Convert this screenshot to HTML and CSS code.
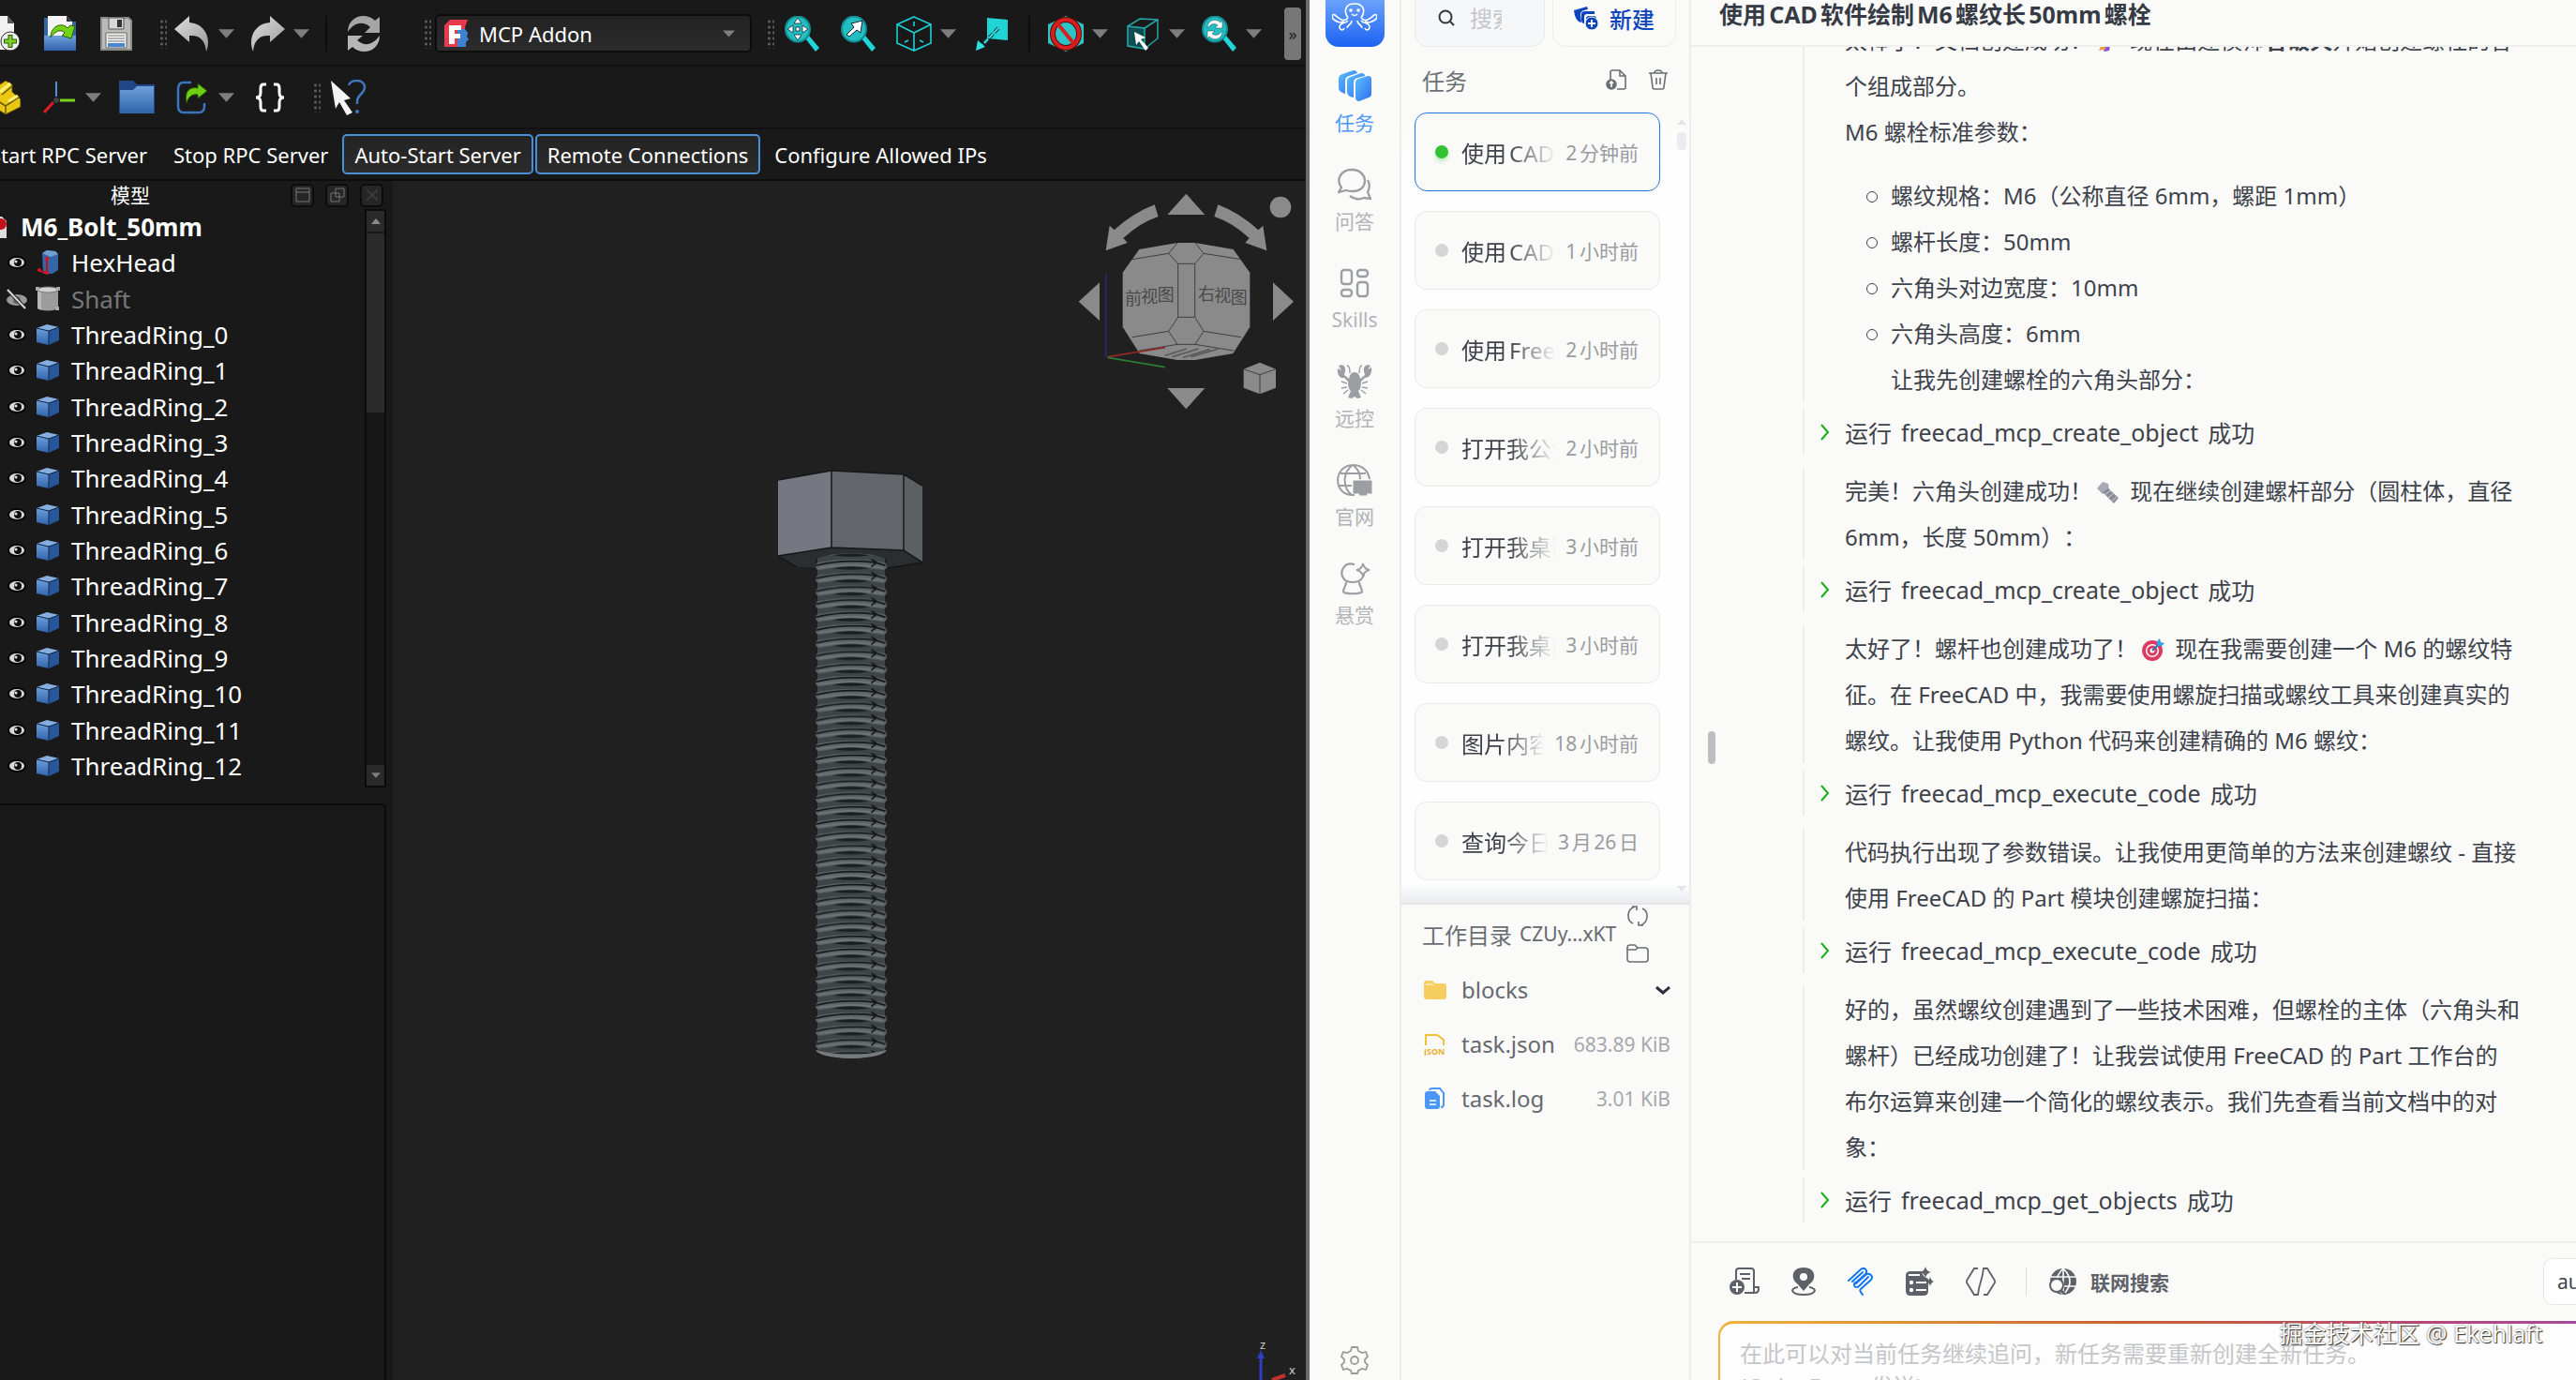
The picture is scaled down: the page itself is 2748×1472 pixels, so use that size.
FILE: index.html
```html
<!DOCTYPE html>
<html lang="zh-CN">
<head>
<meta charset="utf-8">
<title>FreeCAD MCP</title>
<link rel="stylesheet" href="styles.css">
</head>
<body>
<svg class="defs" aria-hidden="true">
  <defs>
    <linearGradient id="gSteel" x1="0" y1="0" x2="1" y2="1"><stop offset="0" stop-color="#dedede"/><stop offset="1" stop-color="#9a9a9a"/></linearGradient>
    <linearGradient id="gBlue" x1="0" y1="0" x2="0" y2="1"><stop offset="0" stop-color="#6fa0dc"/><stop offset="1" stop-color="#2f63ab"/></linearGradient>
    <linearGradient id="gSky" x1="0" y1="0" x2="1" y2="1"><stop offset="0" stop-color="#5cc0ff"/><stop offset="1" stop-color="#2f6cf0"/></linearGradient>
    <symbol id="eye" viewBox="0 0 20 14"><ellipse cx="10" cy="7" rx="10" ry="7" fill="#050505"/><ellipse cx="10" cy="7" rx="8" ry="5" fill="#d9d9d9"/><circle cx="11" cy="7" r="4" fill="#0a0a0a"/><circle cx="9" cy="6" r="1.6" fill="#d9d9d9"/></symbol>
    <symbol id="box" viewBox="0 0 26 24"><path d="M1 5 12 1l13 3-11 4z" fill="#86aede"/><path d="M1 5l13 3v15L1 20z" fill="url(#gBlue)"/><path d="M14 8 25 4v14l-11 5z" fill="#28569a"/><path d="M1 5l13 3 11-4M14 8v15" stroke="#10264a" fill="none"/></symbol>
    <symbol id="caret" viewBox="0 0 18 10"><path d="M0 0h18L9 10z" fill="#7e7e7e"/></symbol>
    <symbol id="lens" viewBox="0 0 38 38"><path d="M22 24l4-3 11 13-4 4z" fill="#1fd5d8"/><ellipse cx="14" cy="14" rx="13" ry="13.500" fill="#22bfc2" stroke="#138f93" stroke-width="2"/></symbol>
  </defs>
</svg>
<div class="desktop">
<section class="cad">
  <div class="toolbar">
    <div class="tools edit">
      <button class="tool" aria-label="新建文件"><svg width="38" height="40" viewBox="0 0 38 40"><path d="M2 1h21l7 8v28H2z" fill="#f1f1f1"/><path d="M23 1l7 8h-7z" fill="#555"/><circle cx="26" cy="28" r="10" fill="#f0f0f0" stroke="#333"/><path d="M26 21v14M19 28h14" stroke="#2a5a10" stroke-width="5"/><path d="M26 22v12M20 28h12" stroke="#7ed321" stroke-width="3"/></svg></button>
      <button class="tool" aria-label="打开"><svg width="34" height="38" viewBox="0 0 34 38"><path d="M0 2h4v20H0zM30 6h4v16h-4z" fill="#3465a4"/><path d="M4 0h20l6 6v20H4z" fill="#f4f4f4"/><path d="M24 0l6 6h-6z" fill="#333"/><path d="M0 21h34v16H0z" fill="url(#gBlue)"/><path d="M7 23c0-14 14-16 18-10l3-3 5 1-4 13-10-3 3-3c-4-4-9-3-15 5z" fill="#73d216" stroke="#2b5d07"/></svg></button>
      <button class="tool" aria-label="保存"><svg width="34" height="36" viewBox="0 0 34 36"><path d="M1 1h29l3 3v31H1z" fill="#b9bbb8" stroke="#8a8c89" stroke-width="2"/><path d="M9 1h16v12H9z" fill="#d8d8d8" stroke="#555"/><path d="M18 3h5v8h-5z" fill="#333"/><path d="M6 17h22v16H6z" fill="#f2f2f2" stroke="#666"/><path d="M8 20h18M8 23h18M8 26h18" stroke="#777"/><path d="M8 28h18v4H8z" fill="#4a86cf"/></svg></button>
      <span class="grip"></span>
      <span class="split"><button aria-label="撤销"><svg width="38" height="40" viewBox="0 0 38 40"><path d="M0 15 16 1v7c16 1 24 16 18 31-1-12-7-18-18-17v7z" fill="url(#gSteel)"/></svg></button><button class="drop" aria-label="撤销列表"><svg width="17" height="10"><use href="#caret"/></svg></button></span>
      <span class="split"><button aria-label="重做"><svg width="38" height="40" viewBox="0 0 38 40"><path d="M38 15 22 1v7C6 9-2 24 4 39c1-12 7-18 18-17v7z" fill="url(#gSteel)"/></svg></button><button class="drop" aria-label="重做列表"><svg width="17" height="10"><use href="#caret"/></svg></button></span>
      <span class="rule"></span>
      <button class="tool" aria-label="刷新"><svg width="36" height="40" viewBox="0 0 36 40"><path d="M1 18C1 1 20-4 30 6l5-4v17H19l6-6C17 6 8 8 1 18z" fill="#a5a5a5"/><path d="M35 22c0 17-19 22-29 12l-5 4V22h16l-6 5c8 7 17 5 24-5z" fill="#b5b5b5"/></svg></button>
    </div>
    <span class="grip apart"></span>
    <button class="combo" aria-label="工作台"><svg width="26" height="30" viewBox="0 0 26 30"><path d="M0 6 6 0h19l-3 8v8L14 29H0z" fill="#e8394d"/><path d="M14 10h8l3 4-1 4 2 3-3 3v5H14z" fill="#3b83d2"/><path d="M5 6h13v5h-7v4h6v5h-6v6H5z" fill="#fff"/></svg><span class="combo-text">MCP Addon</span><svg width="13" height="8"><use href="#caret"/></svg></button>
    <div class="tools view-tools">
      <span class="grip"></span>
      <button class="tool" aria-label="适合全部"><svg width="38" height="38" viewBox="0 0 38 38"><use href="#lens"/><path d="M14 2l4 6h-8zM14 26l4-6h-8zM3 14l6-4v8zM25 14l-6-4v8zM12 12h4v4h-4z" fill="#fff" stroke="#123" stroke-width=".8"/></svg></button>
      <button class="tool" aria-label="适合选择"><svg width="38" height="38" viewBox="0 0 38 38"><use href="#lens"/><path d="M6 20 14 12l-3-4 12-3-2 13-4-3-8 7z" fill="#fff" stroke="#123"/></svg></button>
      <span class="split"><button aria-label="轴测图"><svg width="38" height="38" viewBox="0 0 38 38" fill="none" stroke="#1fd0d4" stroke-width="1.600"><path d="M19 1 37 9v20l-18 8L1 29V9zM1 9l18 9 18-9M19 18v19M19 6v5M9 28l4-2M29 28l-4-2"/></svg></button><button class="drop" aria-label="视图列表"><svg width="17" height="10"><use href="#caret"/></svg></button></span>
      <button class="tool" aria-label="转到链接"><svg width="34" height="36" viewBox="0 0 34 36"><path d="M12 1l22 2v22l-22-2z" fill="#22d3d6"/><path d="M24 12 6 31" stroke="#0a5c60" stroke-width="4" stroke-dasharray="6 2"/><path d="M24 12 6 31" stroke="#5fe4e6" stroke-width="1.500" stroke-dasharray="6 2"/><path d="M0 36l2-11 8 7z" fill="#2de0e2"/></svg></button>
      <span class="rule"></span>
      <span class="split"><button aria-label="绘制样式"><svg width="38" height="38" viewBox="0 0 38 38"><path d="M19 0 38 9v20l-19 9L0 29V9z" fill="#2cc4c7"/><ellipse cx="19" cy="19" rx="14" ry="15" fill="none" stroke="#5a0808" stroke-width="6"/><ellipse cx="19" cy="19" rx="14" ry="15" fill="none" stroke="#d81e1e" stroke-width="4"/><path d="M10 8l18 22" stroke="#d81e1e" stroke-width="4"/></svg></button><button class="drop" aria-label="样式列表"><svg width="17" height="10"><use href="#caret"/></svg></button></span>
      <span class="split"><button aria-label="框选"><svg width="34" height="36" viewBox="0 0 34 36"><path d="M1 10l18 2v22L1 31z" fill="#0e4c50"/><path d="M1 10l18 2v22L1 31zM1 10 14 2l19 1-14 9M33 3v20L19 34" fill="none" stroke="#25a9ad" stroke-width="1.500"/><path d="M8 16l12 6-5 2 8 9-3 3-7-10-3 4z" fill="#fff"/></svg></button><button class="drop" aria-label="框选列表"><svg width="17" height="10"><use href="#caret"/></svg></button></span>
      <span class="split"><button aria-label="同步视图"><svg width="38" height="38" viewBox="0 0 38 38"><use href="#lens"/><path d="M6 13c0-9 9-11 14-6l2-2v8h-8l3-3c-4-3-8-1-11 3zM22 16c0 9-9 11-14 6l-2 2v-8h8l-3 3c4 3 8 1 11-3z" fill="#fff" stroke="#245" stroke-width=".5"/></svg></button><button class="drop" aria-label="同步列表"><svg width="17" height="10"><use href="#caret"/></svg></button></span>
    </div>
    <button class="more" aria-label="更多">»</button>
  </div>
  <div class="toolbar second">
    <div class="tools">
      <button class="tool" aria-label="零件"><svg width="36" height="36" viewBox="0 0 36 36"><path d="M8 8l12-8 7 4v8l9 8v8L20 36 4 26z" fill="#e9c712" stroke="#57490a"/><path d="M16 15 27 6M22 26l13-9M12 22l8 5v8M20 27l7-5" stroke="#6b5a05" stroke-width="1.500" fill="none"/><path d="M14 12 25 3M23 22l10-6" stroke="#fff27a" stroke-width="3"/></svg></button>
      <span class="split"><button aria-label="坐标系"><svg width="34" height="34" viewBox="0 0 34 34"><path d="M14 0v20" stroke="#4a90d9" stroke-width="2"/><path d="M14 20h20" stroke="#7ed321" stroke-width="3"/><path d="M13 20 1 33" stroke="#e01b24" stroke-width="3"/><circle cx="14" cy="20" r="3.500" fill="#444" stroke="#111"/></svg></button><button class="drop" aria-label="坐标系列表"><svg width="17" height="10"><use href="#caret"/></svg></button></span>
      <button class="tool" aria-label="组"><svg width="38" height="36" viewBox="0 0 38 36"><path d="M0 0h15l4 4h19v31H0z" fill="#1f478a"/><path d="M1 10h14l4-4h18v29H1z" fill="url(#gBlue)"/></svg></button>
      <span class="split"><button aria-label="链接"><svg width="34" height="36" viewBox="0 0 34 36"><path d="M16 2H8Q2 2 2 9v18q0 7 6 7h16q6 0 6-7v-3" fill="none" stroke="#3a76bd" stroke-width="2.500"/><path d="M11 24c-3-13 4-18 12-16V3l10 8-10 8v-4c-6-1-10 2-12 9z" fill="#6fce14" stroke="#245204"/></svg></button><button class="drop" aria-label="链接列表"><svg width="17" height="10"><use href="#caret"/></svg></button></span>
      <button class="tool" aria-label="变量集"><svg width="34" height="32" viewBox="0 0 34 32" fill="none" stroke="#fff" stroke-width="3"><path d="M13 2H10Q7 2 7 6v5q0 5-5 5 5 0 5 5v5q0 4 3 4h3M21 2h3q3 0 3 4v5q0 5 5 5-5 0-5 5v5q0 4-3 4h-3"/></svg></button>
      <span class="grip"></span>
      <button class="tool" aria-label="这是什么"><svg width="38" height="38" viewBox="0 0 38 38"><path d="M19 6c2-7 17-7 17 2 0 7-8 8-8 15v3" fill="none" stroke="#3f78bd" stroke-width="2.500"/><circle cx="28" cy="34" r="2" fill="#3f78bd"/><path d="M0 1l21 19-7 2 9 13-6 3-8-14-4 7z" fill="#f4f4f4"/></svg></button>
    </div>
  </div>
  <div class="rpc">
    <button>Start RPC Server</button>
    <button>Stop RPC Server</button>
    <button class="on">Auto-Start Server</button>
    <button class="on">Remote Connections</button>
    <button>Configure Allowed IPs</button>
  </div>
  <div class="work">
    <aside class="model">
      <div class="model-head"><span class="model-title">模型</span>
        <button aria-label="停靠"><svg width="16" height="16" viewBox="0 0 16 16" fill="none" stroke="#777"><path d="M1 1h14v14H1zM1 5h14"/></svg></button>
        <button aria-label="浮动"><svg width="16" height="16" viewBox="0 0 16 16" fill="none" stroke="#777"><path d="M6 1h9v9H6zM1 6h9v9H1z"/></svg></button>
        <button aria-label="关闭"><svg width="16" height="16" viewBox="0 0 16 16" fill="none" stroke="#3a3a3a" stroke-width="2"><path d="M2 2l12 12M14 2 2 14"/></svg></button>
      </div>
      <div class="tree">
        <ul>
          <li class="root"><svg width="8" height="26" viewBox="0 0 8 26"><path d="M0 2h2l5 5v18H0z" fill="#ddd"/><circle cx="1" cy="10" r="6" fill="#c4121c"/></svg><span>M6_Bolt_50mm</span></li>
          <li><svg width="20" height="14"><use href="#eye"/></svg><svg width="26" height="26" viewBox="0 0 26 26"><path d="M7 3l5-3 9 1 3 3v17l-6 4H8z" fill="#3465a4"/><path d="M7 3l5-3 9 1 3 3-8 3z" fill="#729fcf"/><path d="M12 9v15M12 24l-8-2" stroke="#c01020" stroke-width="2"/><circle cx="12" cy="9" r="2" fill="#e01020"/><circle cx="12" cy="24" r="2" fill="#e01020"/><circle cx="4" cy="21" r="2" fill="#e01020"/></svg><span>HexHead</span></li>
          <li class="off"><svg width="22" height="22" viewBox="0 0 22 22"><ellipse cx="11" cy="12" rx="11" ry="6" fill="#9a9a9a"/><circle cx="11" cy="12" r="4" fill="#666"/><path d="M1 1l19 20" stroke="#222" stroke-width="4"/><path d="M1 1l19 20" stroke="#d8d8d8" stroke-width="2"/></svg><svg width="26" height="28" viewBox="0 0 26 28"><path d="M2 4v20q11 5 22 0V4z" fill="#9c9c9c"/><path d="M2 4v20l4 2V5z" fill="#b8b8b8"/><ellipse cx="13" cy="4" rx="11" ry="3" fill="#d0d0d0" stroke="#777"/><path d="M0 1h4v4H0zM22 1h4v4h-4zM21 22h4v4h-4z" fill="#aaa"/></svg><span>Shaft</span></li>
          <li><svg width="20" height="14"><use href="#eye"/></svg><svg width="26" height="24"><use href="#box"/></svg><span>ThreadRing_0</span></li>
          <li><svg width="20" height="14"><use href="#eye"/></svg><svg width="26" height="24"><use href="#box"/></svg><span>ThreadRing_1</span></li>
          <li><svg width="20" height="14"><use href="#eye"/></svg><svg width="26" height="24"><use href="#box"/></svg><span>ThreadRing_2</span></li>
          <li><svg width="20" height="14"><use href="#eye"/></svg><svg width="26" height="24"><use href="#box"/></svg><span>ThreadRing_3</span></li>
          <li><svg width="20" height="14"><use href="#eye"/></svg><svg width="26" height="24"><use href="#box"/></svg><span>ThreadRing_4</span></li>
          <li><svg width="20" height="14"><use href="#eye"/></svg><svg width="26" height="24"><use href="#box"/></svg><span>ThreadRing_5</span></li>
          <li><svg width="20" height="14"><use href="#eye"/></svg><svg width="26" height="24"><use href="#box"/></svg><span>ThreadRing_6</span></li>
          <li><svg width="20" height="14"><use href="#eye"/></svg><svg width="26" height="24"><use href="#box"/></svg><span>ThreadRing_7</span></li>
          <li><svg width="20" height="14"><use href="#eye"/></svg><svg width="26" height="24"><use href="#box"/></svg><span>ThreadRing_8</span></li>
          <li><svg width="20" height="14"><use href="#eye"/></svg><svg width="26" height="24"><use href="#box"/></svg><span>ThreadRing_9</span></li>
          <li><svg width="20" height="14"><use href="#eye"/></svg><svg width="26" height="24"><use href="#box"/></svg><span>ThreadRing_10</span></li>
          <li><svg width="20" height="14"><use href="#eye"/></svg><svg width="26" height="24"><use href="#box"/></svg><span>ThreadRing_11</span></li>
          <li><svg width="20" height="14"><use href="#eye"/></svg><svg width="26" height="24"><use href="#box"/></svg><span>ThreadRing_12</span></li>
        </ul>
        <div class="scroll"><span class="end"><svg width="10" height="6" viewBox="0 0 10 6"><path d="M0 6h10L5 0z" fill="#8a8a8a"/></svg></span><span class="thumb"></span><span class="end"><svg width="10" height="6"><use href="#caret"/></svg></span></div>
      </div>
      <div class="props"></div>
    </aside>
    <main class="view3d">
      <svg class="bolt" width="160" height="632" viewBox="0 0 160 632">
        <defs>
          <pattern id="rings" x="42" y="94" width="76" height="13.800" patternUnits="userSpaceOnUse">
            <rect width="76" height="13.800" fill="#1d2021"/>
            <rect x="2" width="72" height="13.800" fill="#3f4446"/>
            <g fill="none" stroke-linecap="round">
              <path d="M4-4Q38-10 72-4M4 9.800Q38 3.800 72 9.800" stroke="#5e6365" stroke-width="8"/>
              <path d="M4 11.500Q38 6 72 11.500M4-2.300Q38-7.800 72-2.300" stroke="#70757a" stroke-width="1.500"/>
              <path d="M1 9Q30 2 64 6l10 3M60 3l5 3-5 4" stroke="#111517" stroke-width="1.700"/>
            </g>
            <path d="M18 12q20-4 40 0-20 3-40 0z" fill="#181d1f"/>
          </pattern>
        </defs>
        <path d="M2 93 59 84 136 87 156 100 119 106 22 105z" fill="#2a2e31"/>
        <path d="M42 96q38-12 76 0v524q-38 18-76 0z" fill="url(#rings)"/>
        <path d="M42 620q38 10 76 0-4 8-38 9-34-1-38-9z" fill="#767b7d"/>
        <path d="M2 12 59 2v82L2 93z" fill="#757880"/><path d="M59 2l77 4v81l-77-3z" fill="#63656b"/><path d="M136 6l20 12v82l-20-13z" fill="#5b6163"/>
        <path d="M2 12 59 2l77 4 20 12M2 93l57-9 77 3 20 13M59 2v82M136 6v81M2 93l20 12M156 100l-37 6" fill="none" stroke="#15181b" stroke-width="1.500"/>
      </svg>
      <svg class="navcube" width="250" height="240" viewBox="120 60 750 720">
        <g fill="#8a8a8a">
          <path d="M496 80l60 67H436zM496 769l60-67H436zM152 425l67-61v122zM840 425l-66-61v122z"/>
          <circle cx="798" cy="123" r="34"/>
          <path d="M395 115l12 38q-60 20-112 69l13 15-69 25 12-80 15 14q60-55 129-81zM598 115l-12 38q60 20 112 69l-13 15 69 25-12-80-15 14q-60-55-129-81z"/>
          <path d="M732 620l51 21v60l-51 20-52-20v-60z"/>
          <path d="M468 237h57l122 21 53 74v176l-53 83-122 21h-57l-122-21-53-83V332l53-74z"/>
        </g>
        <g fill="none" stroke="#303030" stroke-width="2.500">
          <path d="M680 641l52 18 51-18M732 659v62"/>
          <path d="M468 237l-28 34 30 33h54l28-33-27-34M323 290l117-19M552 271l120 19M470 304v171M524 304v171M470 475h54l28 45-27 42h-57l-28-42zM440 520l-117 19M552 520l120 19M468 562l-122 20M525 562l122 20M293 508l53 83M700 508l-53 83"/>
        </g>
        <path d="M428 598l70-22M452 602l84-26M486 604l86-26M512 602l88-26" stroke="#5c5c5c" stroke-width="5"/>
        <text class="cube-label" x="300 352 404" y="436 430 424">前视图</text>
        <text class="cube-label" x="534 586 638" y="420 426 432">右视图</text>
        <g fill="none" stroke-width="5"><path d="M239 337v265" stroke="#2b2b78"/><path d="M245 602l184-30" stroke="#8f2929"/><path d="M245 604l184 31" stroke="#2c7c34"/></g>
      </svg>
      <svg class="axes" width="60" height="42" viewBox="0 0 60 42"><path d="M12 42V14" stroke="#2f3fc0" stroke-width="3"/><path d="M12 10l-4 9h8z" fill="#2f3fc0"/><path d="M24 42l14-5" stroke="#c03030" stroke-width="4"/><text class="axis-name" x="11" y="9">z</text><text class="axis-name" x="42" y="36">x</text></svg>
    </main>
  </div>
</section>

<section class="agent">
  <nav class="rail">
    <span class="logo"><svg width="48" height="34" viewBox="0 0 48 34" fill="none" stroke="#fff" stroke-width="1.600"><path d="M17 17c-5-7-3-15 7-15s12 8 7 15M17 17c-5 6-10 0-14-3-3-2-4 3-1 5s6 4 11 2M31 17c5 6 10 0 14-3 3-2 4 3 1 5s-6 4-11 2M17 20c-4 4-9 2-9 7 0 3 4 4 5 1M31 20c4 4 9 2 9 7 0 3-4 4-5 1M21 20c0 5-5 4-5 8M27 20c0 5 5 4 5 8M21 13q3 3 6 0"/><circle cx="20" cy="9" r="1"/><circle cx="28" cy="9" r="1"/></svg></span>
    <a href="#tasks" class="here"><svg width="36" height="36" viewBox="0 0 36 36"><path d="M1 10q0-4 4-5l12-4q3 0 4 3L12 7q-4 1-4 5v14q-7-2-7-6z" fill="url(#gSky)"/><path d="M10 12q0-3 4-4l11-4q4 0 4 3l-8 2q-4 1-4 5v16q-7-1-7-6z" fill="url(#gSky)"/><path d="M19 14q0-3 3-4l10-3q4 0 4 3v16q0 3-3 4l-10 4q-4 0-4-4z" fill="url(#gSky)"/></svg>任务</a>
    <a href="#qa"><svg width="36" height="36" viewBox="0 0 36 36" fill="none" stroke="#9b9fa3" stroke-width="2.300"><path d="M1 26l3-5C-3 11 5 2 15 2c18 0 19 23 1 23-3 0-5 0-7-1zM32 13c3 5 2 9 0 13l3 7-7-1c-4 2-10 2-15-2"/></svg>问答</a>
    <a href="#skills"><svg width="32" height="32" viewBox="0 0 32 32" fill="none" stroke="#9b9fa3" stroke-width="2.400"><rect x="2" y="2" width="11" height="15" rx="3"/><rect x="19" y="2" width="11" height="7" rx="3"/><rect x="2" y="23" width="11" height="7" rx="3"/><rect x="19" y="15" width="11" height="15" rx="3"/></svg>Skills</a>
    <a href="#remote"><svg width="38" height="38" viewBox="0 0 38 38" fill="#9b9fa3"><path d="M2 2c4-2 8 1 7 6l-1 4 5 4q1-7 6-7t6 7l5-4-1-4c-1-5 3-8 7-6l-3 4 4-2c1 6-2 11-7 11l-4 4q0 8-3 10l3 7-4 1-3-2-3 2-4-1 3-7q-3-2-3-10l-4-4C3 16 0 11 1 5l4 2z"/><path d="M14 10q0-8-3-8M24 10q0-8 3-8M11 21l-6-2M11 25l-6 1M12 28l-5 4M27 21l6-2M27 25l6 1M26 28l5 4" stroke="#9b9fa3" stroke-width="1.500" fill="none"/></svg>远控</a>
    <a href="#site"><svg width="38" height="36" viewBox="0 0 38 36" fill="none" stroke="#9b9fa3" stroke-width="2"><path d="M19 34C-4 36-5 3 17 2c11 0 17 7 18 15M16 34C6 26 6 10 17 2c6 4 8 9 8 15M4 11h27M2 24h14"/><path d="M19 20h17v11H19zM24 33h8" fill="#9b9fa3" stroke-width="3"/></svg>官网</a>
    <a href="#bounty"><svg width="34" height="36" viewBox="0 0 34 36" fill="none" stroke="#9b9fa3" stroke-width="2.200"><path d="M17 3C5 0 0 12 6 19c4 4 14 4 18 0 2-2 3-4 3-6M8 22c0 4-3 6-3 10 0 3 20 3 20 0 0-4-3-6-3-10"/><path d="M26 2q1 6 7 7-6 1-7 7-1-6-7-7 6-1 7-7z" stroke-width="1.800"/></svg>悬赏</a>
    <button class="gear" aria-label="设置"><svg width="30" height="30" viewBox="0 0 30 30" fill="none" stroke="#9a9a9a" stroke-width="1.800"><circle cx="15" cy="15" r="4"/><path d="M12 1h6l1 4 4 2 4-1 2 5-3 3v3l3 3-2 5-4-1-4 2-1 3h-6l-1-3-4-2-4 1-2-5 3-3v-3L1 11l2-5 4 1 4-2z"/></svg></button>
  </nav>
  <aside class="side">
    <div class="side-top">
      <label class="search"><svg width="18" height="18" viewBox="0 0 18 18" fill="none" stroke="#33363b" stroke-width="2"><circle cx="8" cy="8" r="6.500"/><path d="M13 13l4 4"/></svg><input type="text" placeholder="搜索" aria-label="搜索"></label>
      <button class="new"><svg width="26" height="26" viewBox="0 0 26 26"><path d="M0 5l14-4 1 3q-8 1-8 5l1 9Q1 17 0 5z" fill="#0b45bd"/><path d="M8 9q0-3 4-3h10v3h-8q-3 0-3 3v7q-3 0-3-4z" fill="#0b45bd"/><rect x="13" y="11" width="11" height="11" rx="3" fill="#0b45bd"/><circle cx="19" cy="19" r="7" fill="#0b45bd" stroke="#fafaf9"/><path d="M19 15v8M15 19h8" stroke="#fff" stroke-width="1.800"/></svg>新建</button>
    </div>
    <div class="side-head"><h2>任务</h2>
      <button aria-label="导入"><svg width="22" height="22" viewBox="0 0 22 22" fill="none" stroke="#6b6e72" stroke-width="1.600"><path d="M5 11V3q0-2 2-2h8l6 6v12q0 2-2 2h-7M15 1v6h6"/><circle cx="6" cy="16" r="5" fill="#6b6e72"/><path d="M6 19v-5M4 15l2-2 2 2" stroke="#fff"/></svg></button>
      <button aria-label="删除"><svg width="20" height="22" viewBox="0 0 20 22" fill="none" stroke="#6b6e72" stroke-width="1.600"><path d="M0 4h20M6 4q0-3 4-3t4 3M2 4l2 15q0 2 2 2h8q2 0 2-2l2-15M8 9v7M12 9v7"/></svg></button>
    </div>
    <div class="tasks">
      <div class="cards">
        <button class="card active"><i></i><b>使用CAD</b><time>2分钟前</time></button>
        <button class="card"><i></i><b>使用CAD</b><time>1小时前</time></button>
        <button class="card"><i></i><b>使用Free</b><time>2小时前</time></button>
        <button class="card"><i></i><b>打开我公众</b><time>2小时前</time></button>
        <button class="card"><i></i><b>打开我桌面</b><time>3小时前</time></button>
        <button class="card"><i></i><b>打开我桌面</b><time>3小时前</time></button>
        <button class="card"><i></i><b>图片内容</b><time>18小时前</time></button>
        <button class="card"><i></i><b>查询今日</b><time>3月26日</time></button>
      </div>
      <div class="thin-scroll"><span></span></div>
    </div>
    <div class="files">
      <div class="files-head"><h2>工作目录</h2><span class="dir">CZUy...xKT</span>
        <span class="files-tools"><button aria-label="刷新目录"><svg width="22" height="24" viewBox="0 0 22 24" fill="none" stroke="#6b6e72" stroke-width="1.600"><path d="M8 2C-1 5-1 17 6 20M14 22c9-3 9-15 2-18M5 2h5v4M17 22h-5v-4"/></svg></button><button aria-label="打开目录"><svg width="24" height="20" viewBox="0 0 24 20" fill="none" stroke="#6b6e72" stroke-width="1.600"><path d="M1 4q0-3 3-3h5l3 3h8q3 0 3 3v9q0 3-3 3H4q-3 0-3-3zM1 6h9l2-2"/></svg></button></span>
      </div>
      <a href="#blocks" class="file"><svg width="24" height="20" viewBox="0 0 24 20"><path d="M0 3q0-3 3-3h6l3 3h9q3 0 3 3v11q0 3-3 3H3q-3 0-3-3z" fill="#f6ce60"/><path d="M2 4h8" stroke="#fff" stroke-width="1"/></svg><span class="name">blocks</span><svg class="chev" width="16" height="10" viewBox="0 0 16 10" fill="none" stroke="#2c2f3c" stroke-width="3"><path d="M1 2l7 6 7-6"/></svg></a>
      <a href="#json" class="file"><svg width="24" height="24" viewBox="0 0 24 24"><path d="M2 13V2h12l7 5v6" fill="none" stroke="#f2bf3d" stroke-width="2"/><text class="json" x="0" y="23">JSON</text></svg><span class="name">task.json</span><span class="size">683.89 KiB</span></a>
      <a href="#log" class="file"><svg width="24" height="24" viewBox="0 0 24 24"><path d="M6 3q0-2 3-2h8l4 5v12q0 3-3 3" fill="none" stroke="#4b97f8" stroke-width="2"/><path d="M1 7q0-3 3-3h8l5 5v11q0 3-3 3H4q-3 0-3-3z" fill="#4b97f8"/><path d="M6 14h7M6 18h7" stroke="#fff" stroke-width="1.600"/></svg><span class="name">task.log</span><span class="size">3.01 KiB</span></a>
    </div>
  </aside>
  <main class="chat">
    <header><h1>使用CAD软件绘制M6螺纹长50mm螺栓</h1></header>
    <div class="feed">
      <span class="handle"></span>
      <div class="say">
        <p>太棒了！文档创建成功！<svg class="emoji" viewBox="0 0 24 24"><path d="M23 1Q13 1 8 11l5 5Q23 11 23 1z" fill="#d8d4e4"/><path d="M8 10l-5 1-2 6 5-1zM14 16l-1 6-6 1 2-7z" fill="#8a4fd0"/><path d="M2 22l3-7 5 5z" fill="#f59a3c"/></svg> 现在由建模师<strong>曾破天</strong>开始创建螺栓的各个组成部分。</p>
        <p>M6 螺栓标准参数：</p>
        <ul><li>螺纹规格：M6（公称直径 6mm，螺距 1mm）</li><li>螺杆长度：50mm</li><li>六角头对边宽度：10mm</li><li>六角头高度：6mm<br>让我先创建螺栓的六角头部分：</li></ul>
      </div>
      <div class="run"><svg width="10" height="18" viewBox="0 0 10 18"><path d="M1 1l7 8-7 8"/></svg><span>运行</span><span>freecad_mcp_create_object</span><span>成功</span></div>
      <div class="say"><p>完美！六角头创建成功！<svg class="emoji" viewBox="0 0 24 24"><path d="M0 8 6 1l6 2 1 6-7 5z" fill="#a9a9b4"/><path d="M6 12l6-4 11 10-5 6z" fill="#8b8b97"/><path d="M8 15l7-5M12 18l6-5M15 22l6-5" stroke="#d5d5de"/></svg> 现在继续创建螺杆部分（圆柱体，直径 6mm，长度 50mm）：</p></div>
      <div class="run"><svg width="10" height="18" viewBox="0 0 10 18"><path d="M1 1l7 8-7 8"/></svg><span>运行</span><span>freecad_mcp_create_object</span><span>成功</span></div>
      <div class="say"><p>太好了！螺杆也创建成功了！<svg class="emoji" viewBox="0 0 24 24"><circle cx="11" cy="13" r="9" fill="#fff" stroke="#dc3a63" stroke-width="4"/><circle cx="11" cy="13" r="4" fill="#fff" stroke="#dc3a63" stroke-width="3"/><path d="M11 13l7-7" stroke="#2b6fa8" stroke-width="2"/><path d="M16 8V3l3-3 1 4 4 1-3 3z" fill="#2f9fe6"/></svg> 现在我需要创建一个 M6 的螺纹特征。在 FreeCAD 中，我需要使用螺旋扫描或螺纹工具来创建真实的螺纹。让我使用 Python 代码来创建精确的 M6 螺纹：</p></div>
      <div class="run"><svg width="10" height="18" viewBox="0 0 10 18"><path d="M1 1l7 8-7 8"/></svg><span>运行</span><span>freecad_mcp_execute_code</span><span>成功</span></div>
      <div class="say"><p>代码执行出现了参数错误。让我使用更简单的方法来创建螺纹 - 直接使用 FreeCAD 的 Part 模块创建螺旋扫描：</p></div>
      <div class="run"><svg width="10" height="18" viewBox="0 0 10 18"><path d="M1 1l7 8-7 8"/></svg><span>运行</span><span>freecad_mcp_execute_code</span><span>成功</span></div>
      <div class="say"><p>好的，虽然螺纹创建遇到了一些技术困难，但螺栓的主体（六角头和螺杆）已经成功创建了！让我尝试使用 FreeCAD 的 Part 工作台的<br>布尔运算来创建一个简化的螺纹表示。我们先查看当前文档中的对象：</p></div>
      <div class="run"><svg width="10" height="18" viewBox="0 0 10 18"><path d="M1 1l7 8-7 8"/></svg><span>运行</span><span>freecad_mcp_get_objects</span><span>成功</span></div>
    </div>
    <footer>
      <div class="bar">
        <button aria-label="添加文档"><svg width="32" height="30" viewBox="0 0 32 30" fill="none" stroke="#5d6168" stroke-width="2"><path d="M7 13V4q0-3 3-3h13q3 0 3 3v17h5v2q0 4-4 4H16M11 7h11M13 12h9M26 21v5"/><circle cx="8" cy="21" r="8" fill="#5d6168" stroke="none"/><path d="M8 16v10M3 21h10" stroke="#fff"/></svg></button>
        <button aria-label="定位"><svg width="26" height="30" viewBox="0 0 26 30"><path d="M13 0C0 0-1 12 6 17l7 8 7-8C27 12 26 0 13 0z" fill="#5d6168"/><circle cx="13" cy="10" r="4" fill="#fff"/><path d="M7 21c-9 1-8 8 6 8s15-7 6-8" fill="none" stroke="#5d6168" stroke-width="2"/></svg></button>
        <button aria-label="MCP"><svg width="28" height="30" viewBox="0 0 28 30" fill="none" stroke="#1477f0" stroke-width="2" stroke-linecap="round"><path d="M1 14 14 2c4-3 8 1 5 5L8 17M9 17 19 8c4-3 9 1 6 5L14 23c-2 2 0 3 2 6M5 15 16 5M22 10 12 20c-3 3-7-1-4-4"/></svg></button>
        <button aria-label="智能任务"><svg width="30" height="32" viewBox="0 0 30 32"><path d="M0 10q0-5 5-5h12q0 5 7 8v13q0 5-5 5H5q-5 0-5-5z" fill="#5d6168"/><path d="M3 9h12M11 17h11M11 25h11" stroke="#fff" stroke-width="2"/><circle cx="6" cy="17" r="2.200" fill="#fff"/><circle cx="6" cy="25" r="2.200" fill="#fff"/><path d="M21 0q1 5 6 6-5 1-6 6-1-5-6-6 5-1 6-6zM26 11q1 4 4 5-3 1-4 5-1-4-4-5 3-1 4-5z" fill="#5d6168"/></svg></button>
        <button aria-label="代码"><svg width="32" height="30" viewBox="0 0 32 30" fill="none" stroke="#5d6168" stroke-width="1.800"><path d="M13 1H9L1 14v2l8 13h4q1-8 3-14T19 1h4l8 13v2l-8 13h-4"/></svg></button>
        <span class="bar-rule"></span>
        <button class="web"><svg width="30" height="28" viewBox="0 0 30 28"><ellipse cx="15" cy="14" rx="14" ry="14" fill="#5d6168"/><path d="M15 0v28M1 9h28M1 19h28M15 0q-14 14 0 28M15 0q14 14 0 28" stroke="#fafaf9" stroke-width="1.600" fill="none"/><circle cx="8" cy="18" r="7" fill="#fafaf9" stroke="#5d6168" stroke-width="2"/><path d="M12 23l5 5" stroke="#5d6168" stroke-width="3"/></svg>联网搜索</button>
        <select aria-label="模型"><option>auto</option></select>
      </div>
      <div class="prompt"><textarea aria-label="输入" placeholder="在此可以对当前任务继续追问，新任务需要重新创建全新任务。&#10;(Ctrl + Enter 发送)"></textarea></div>
    </footer>
  </main>
</section>
<div class="watermark">掘金技术社区 @ Ekehlaft</div>
</div>
</body>
</html>
```
FILE: styles.css
```css
* { box-sizing: border-box; }
body { margin: 0; font-family: "Noto Sans", "Noto Sans CJK SC", sans-serif; font-size: 24px; text-autospace: normal; text-spacing-trim: space-all; }
h1, h2, p, ul { margin: 0; padding: 0; }
ul { list-style: none; }
button { font: inherit; color: inherit; background: none; border: 0; padding: 0; margin: 0; display: inline-flex; align-items: center; justify-content: center; }
a { color: inherit; text-decoration: none; }
svg { display: block; flex: none; }
.defs { position: absolute; width: 0; height: 0; }
.desktop { position: relative; display: flex; height: 100vh; overflow: hidden; }

/* CAD window */
.cad { flex: 0 0 1397px; min-width: 0; display: flex; flex-direction: column; background: #191919; color: #fff; border-right: 4px solid #6b6b6b; overflow: hidden; }
.toolbar { display: flex; align-items: center; height: 71px; padding-top: 2px; border-bottom: 2px solid #101010; flex: none; }
.second { height: 67px; padding-top: 0; }
.tools { display: flex; align-items: center; }
.tools:first-child { margin-left: -26px; }
.tool { width: 60px; height: 44px; }
.split { display: flex; margin-left: 10px; }
.edit .split { margin-left: 8px; }
.split button { width: 38px; height: 44px; }
.split .drop { width: 34px; }
.grip { width: 24px; height: 32px; padding-left: 16px; background: radial-gradient(circle, #5c5c5c 1px, transparent 2px) 0 0 / 5px 6px content-box; }
.apart { margin-left: 18px; }
.rule { width: 2px; height: 38px; margin: 0 9px; background: #0c0c0c; }
.combo { flex: 0 0 338px; height: 41px; margin-left: 4px; padding: 0 16px 0 8px; gap: 11px; border: 2px solid #0c0c0c; border-radius: 5px; background: linear-gradient(#222, #2c2c2c); font-size: 22px; }
.combo-text { flex: 1; text-align: left; }
.more { width: 18px; height: 56px; margin: 0 5px 0 auto; border-radius: 4px; background: #777; color: #222; font-size: 18px; }
.rpc { display: flex; align-items: center; gap: 2px; height: 55px; margin-left: -24px; border-bottom: 2px solid #0d0d0d; font-size: 22px; flex: none; }
.rpc button { height: 43px; padding: 0 11px; border: 2px solid transparent; border-radius: 5px; white-space: nowrap; }
.rpc .on { border-color: #4a90d9; background: linear-gradient(#232323, #2c2c2c); }
.work { flex: 1; display: flex; min-height: 0; }
.model { flex: 0 0 419px; display: flex; flex-direction: column; padding-right: 7px; }
.model-head { display: flex; align-items: center; gap: 12px; height: 30px; padding-right: 3px; flex: none; }
.model-title { flex: 1; padding-left: 118px; font-size: 21px; line-height: 30px; }
.model-head button { width: 25px; height: 25px; border: 2px solid #0c0c0c; border-radius: 5px; background: #262626; }
.tree { flex: 0 0 617px; display: flex; }
.tree ul { flex: 1; display: grid; grid-auto-rows: 1fr; padding-bottom: 4px; font-size: 26px; line-height: 36px; }
.tree li { display: grid; grid-template-columns: 22px 26px 1fr; column-gap: 9px; padding-left: 7px; align-items: center; justify-items: center; }
.tree li span { justify-self: start; padding-left: 3px; }
.tree .root { display: flex; gap: 11px; padding: 0; font-weight: 700; }
.off { color: #777; }
.scroll { width: 23px; display: flex; flex-direction: column; border: 2px solid #0b0b0b; background: #171717; }
.scroll .end { height: 22px; display: flex; align-items: center; justify-content: center; background: #2a2a2a; }
.thumb { flex: 0 0 191px; margin: 2px 0 auto; background: #2b2b2b; }
.props { flex: 1; margin-top: 17px; border: solid #0c0c0c; border-width: 2px 2px 0 0; border-radius: 0 5px 0 0; }
.view3d { position: relative; flex: 1; display: flex; align-items: center; justify-content: center; padding: 0 0 34px 4px; background: #202020; overflow: hidden; }
.navcube { position: absolute; top: 7px; right: 3px; }
.cube-label { font-size: 54px; fill: #4a4a4a; }
.axes { position: absolute; right: 0; bottom: 0; }
.axis-name { font-size: 13px; fill: #ccc; }

/* Agent window */
.agent { flex: 1; min-width: 0; display: flex; background: #fafaf9; color: #3e424b; }
.rail { flex: 0 0 98px; display: flex; flex-direction: column; align-items: center; padding-bottom: 6px; border-right: 2px solid #ececec; font-size: 21px; color: #b2b4b7; }
.logo { width: 63px; height: 63px; margin: -13px 0 19px; display: flex; align-items: center; justify-content: center; border-radius: 14px; background: linear-gradient(#7fb2ff, #1c62f2); }
.rail a { display: flex; flex-direction: column; align-items: center; justify-content: space-between; height: 79px; margin-bottom: 26px; line-height: 34px; text-align: center; }
.rail a svg { margin: auto; }
.rail .here { color: #4a97fb; }
.gear { margin-top: auto; }
.side { flex: 0 0 309px; min-width: 0; display: flex; flex-direction: column; border-right: 2px solid #ececec; }
.side-top { display: flex; gap: 8px; height: 62px; margin: -12px 14px 0; flex: none; }
.search { flex: 0 0 138px; display: flex; align-items: center; gap: 16px; padding: 0 45px 0 24px; border: 1px solid #e9e9e9; border-radius: 14px; background: #f6f7f9; }
.search input { flex: 1; min-width: 0; width: 34px; border: 0; padding: 0; background: none; font: inherit; }
::placeholder { color: #c4c6c9; opacity: 1; }
.new { flex: 1; gap: 12px; border: 1px solid #ececec; border-radius: 14px; color: #0b45bd; font-weight: 500; }
.side-head { display: flex; align-items: center; gap: 24px; height: 70px; padding: 0 23px 0 22px; flex: none; color: #6b6e72; }
h2 { flex: 1; font-size: 24px; font-weight: 400; white-space: nowrap; color: #6b6e72; }
.tasks { flex: 1; min-height: 0; display: flex; overflow: hidden; background: linear-gradient(#fafaf9, #fefefe 60px, #fefefe 822px, #e9ebee); }
.cards { flex: 1; min-width: 0; display: flex; flex-direction: column; gap: 21px; padding-left: 14px; }
.card { flex: none; height: 84px; gap: 14px; padding: 0 22px 0 21px; border: 1px solid #e9e9e8; border-radius: 13px; background: #fafaf9; }
.card.active { border-color: #2378e0; }
.card i { flex: none; width: 14px; height: 14px; border-radius: 50%; background: #d3d5d6; }
.card.active i { background: #34c134; box-shadow: 0 3px 4px #b9ecb9; }
.card b { flex: 1; min-width: 0; overflow: hidden; white-space: nowrap; text-align: left; font-weight: 400; margin-right: -4px; mask-image: linear-gradient(90deg, #000 50%, transparent); }
.card time { font-size: 21px; color: #9a9ca0; white-space: nowrap; }
.thin-scroll { flex: none; width: 31px; padding: 7px 0 12px 18px; display: flex; flex-direction: column; gap: 8px; }
.thin-scroll::before, .thin-scroll::after { content: ""; width: 0; border: solid transparent; border-width: 0 5px 6px; border-bottom-color: #e3e4e7; }
.thin-scroll::after { margin-top: auto; border-width: 6px 5px 0; border-top-color: #e3e4e7; }
.thin-scroll span { width: 10px; height: 19px; border-radius: 4px; background: #ebecef; }
.files { flex: 0 0 509px; border-top: 2px solid #e3e4e9; color: #66696e; }
.files-head { display: flex; align-items: center; gap: 8px; height: 62px; padding: 0 43px 0 22px; }
.files-head h2 { flex: none; }
.dir { flex: 1; font-size: 21px; }
.files-tools { display: flex; flex-direction: column; align-items: center; gap: 18px; }
.file { display: grid; grid-template-columns: 24px 1fr auto; column-gap: 16px; align-items: center; height: 58px; padding: 0 20px 0 24px; line-height: 34px; }
.size { font-size: 21px; color: #a6a8ac; }
.json { font-size: 9px; font-weight: 700; fill: #e8b22c; }

/* Conversation */
.chat { flex: 1; min-width: 0; display: flex; flex-direction: column; overflow: hidden; }
.chat header { height: 50px; flex: none; padding-left: 30px; border-bottom: 2px solid #efefee; }
h1 { font-size: 25px; line-height: 30px; font-weight: 700; color: #363a45; }
.feed { position: relative; flex: 1; min-height: 0; display: flex; flex-direction: column; justify-content: flex-end; padding: 0 50px 6px 119px; overflow: hidden; }
.handle { position: absolute; left: 18px; top: 730px; width: 8px; height: 35px; border-radius: 4px; background: #bcbec0; }
.say { flex: none; padding-left: 43px; border-left: 2px solid #ededec; line-height: 49px; }
.say ul { margin-top: 19px; }
.say li { position: relative; padding-left: 49px; }
.say li::before { content: ""; position: absolute; left: 23px; top: 20px; width: 10px; height: 10px; border: 1px solid #3e424b; border-radius: 50%; }
.emoji { display: inline-block; width: 24px; height: 24px; margin: 0 5px; vertical-align: -4px; }
.run { flex: none; display: flex; align-items: center; gap: 10px; height: 49px; margin: 7px 0 14px; padding-left: 17px; border-left: 2px solid #ededec; font-size: 25px; }
.run svg { margin-right: 6px; fill: none; stroke: #16b016; stroke-width: 2; }
footer { flex: none; height: 148px; padding: 16px 0 0 29px; border-top: 2px solid #efefee; overflow: hidden; }
.bar { display: flex; align-items: center; height: 50px; margin-right: -60px; gap: 34px; }
.bar-rule { width: 1px; height: 30px; margin: 0 -10px 0 -2px; background: #dcdcdc; }
.bar button:first-child { margin-left: 12px; }
.web { gap: 14px; font-size: 21px; font-weight: 700; color: #5d6168; }
.bar select { appearance: none; width: 95px; height: 50px; margin-left: auto; padding: 0 14px; border: 1px solid #e6e6e6; border-radius: 10px; background: #fff; font: inherit; font-size: 21px; color: #3e424b; }
.prompt { height: 120px; margin: 17px -60px 0 0; padding: 3px 2px; border-radius: 16px; background: linear-gradient(90deg, #f0b43c, #c9602f 45%, #b8487a 78%, #a04aa8); }
textarea { display: block; width: 100%; height: 114px; padding: 14px 21px; border: 0; border-radius: 14px; background: #fdfdfd; font: inherit; line-height: 35px; resize: none; }
.watermark { position: absolute; right: 36px; bottom: 33px; font-size: 25px; line-height: 34px; color: #fff; text-shadow: 1px 1px 1px #333, 0 0 2px #555; }
```
